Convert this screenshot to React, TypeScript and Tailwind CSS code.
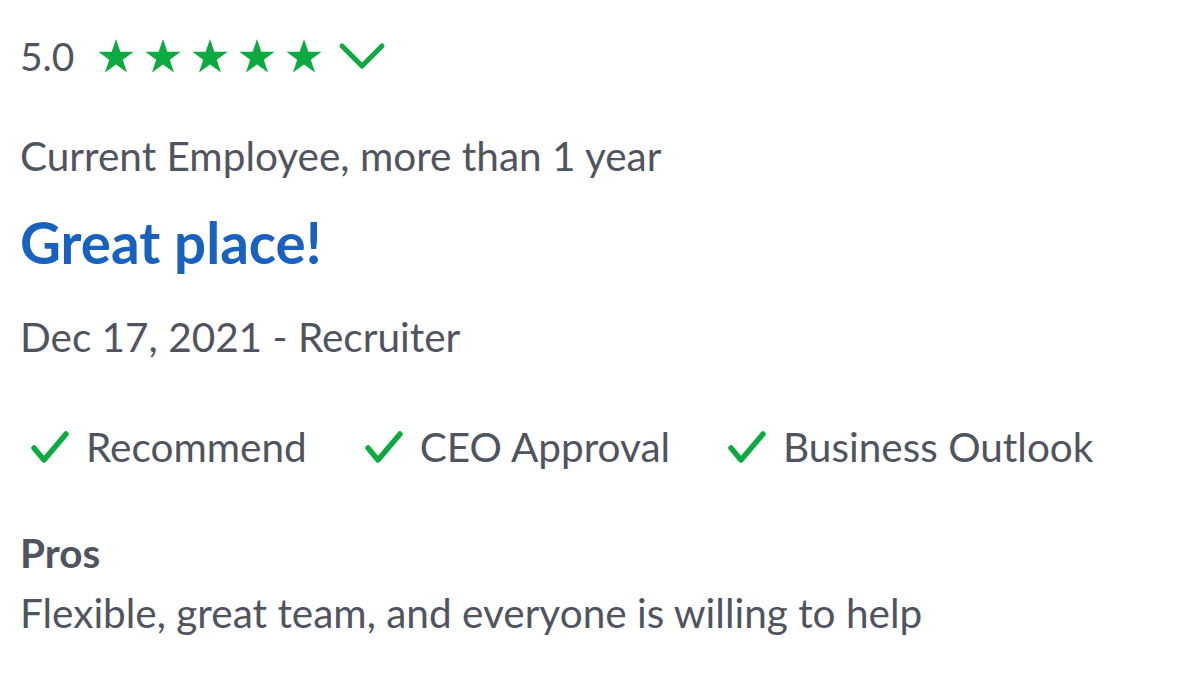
import React from 'react';

const Star: React.FC = () => (
  <svg viewBox="0 0 24 24" className="h-[40px] w-[40px]" fill="#0caa41">
    <path d="M12 1.8l2.6 7.6h8l-6.5 4.8 2.5 7.7L12 17.1l-6.6 4.8 2.5-7.7L1.4 9.4h8z" />
  </svg>
);

const Check: React.FC = () => (
  <svg viewBox="0 0 40 34" className="h-[34px] w-[40px]" fill="none" stroke="#0caa41" strokeWidth="5.5" strokeLinecap="round" strokeLinejoin="round">
    <path d="M4 18l10 12L36 4" />
  </svg>
);

const Item: React.FC<{ label: string }> = ({ label }) => (
  <div className="flex items-center gap-[16px]">
    <Check />
    <span>{label}</span>
  </div>
);

const App: React.FC = () => {
  return (
    <div className="h-[675px] w-[1200px] bg-white px-[20px] pt-[32px] text-[#50545e]" style={{ fontFamily: 'Lato, "Open Sans", sans-serif' }}>
      {/* Rating */}
      <div className="flex h-[48px] items-center">
        <span className="text-[39px] leading-[48px]">5.0</span>
        <div className="ml-[22px] flex items-center gap-[7px]">
          <Star />
          <Star />
          <Star />
          <Star />
          <Star />
          <svg viewBox="0 0 48 28" className="ml-[7px] h-[28px] w-[48px]" fill="none" stroke="#0caa41" strokeWidth="5" strokeLinecap="round" strokeLinejoin="round">
            <path d="M4 4l20 20L44 4" />
          </svg>
        </div>
      </div>

      <p className="mt-[52px] text-[40.5px] leading-[48px]">Current Employee, more than 1 year</p>
      <h1 className="mt-[30px] text-[56.5px] font-bold leading-[64px] text-[#1861bf]">Great place!</h1>
      <p className="mt-[39px] text-[40.5px] leading-[48px]">Dec 17, 2021 - Recruiter</p>

      {/* Ratings breakdown */}
      <div className="mt-[62px] flex h-[48px] items-center gap-[57px] pl-[10px] text-[40.5px] leading-[48px]">
        <Item label="Recommend" />
        <Item label="CEO Approval" />
        <Item label="Business Outlook" />
      </div>

      <h2 className="mt-[58px] text-[40.5px] font-bold leading-[48px]">Pros</h2>
      <p className="mt-[12px] text-[40.5px] leading-[48px]">Flexible, great team, and everyone is willing to help</p>
    </div>
  );
};

export default App;
